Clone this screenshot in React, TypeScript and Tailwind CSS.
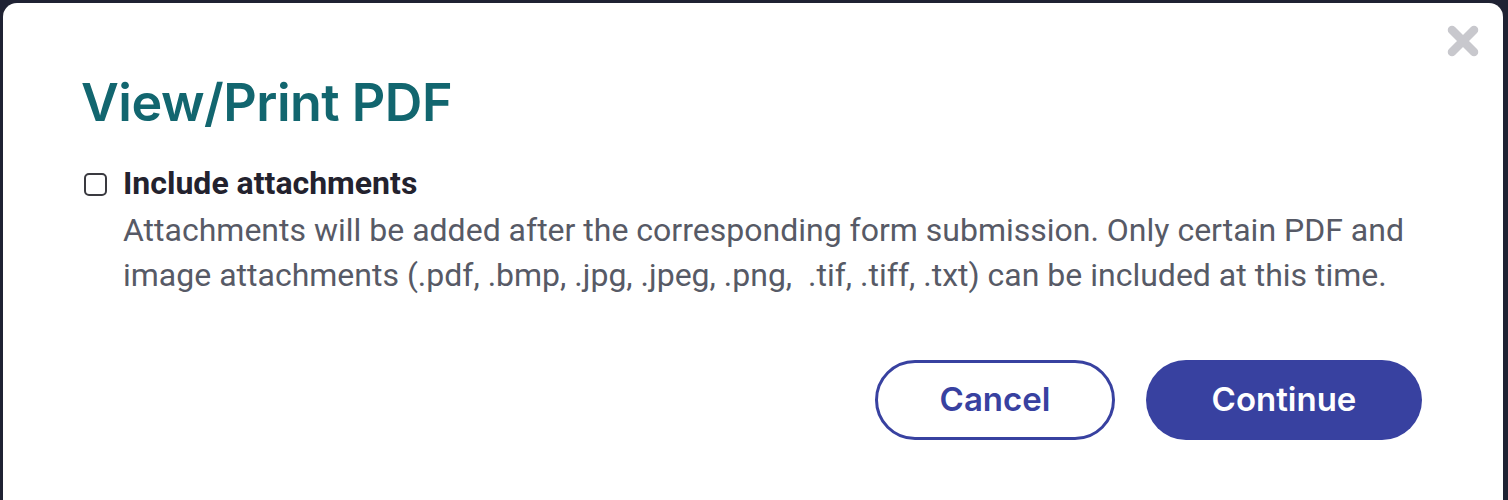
import React from "react";

export default function App() {
  return (
    <div className="h-[500px] w-[1508px] bg-[#1f2233] pl-[3px] pr-[5px] pt-[3px] overflow-hidden">
      <div className="relative h-[510px] rounded-[14px] bg-white pl-[81px] pr-[81px] pt-[70px]">
        <button className="absolute right-[23px] top-[21px] h-[34px] w-[34px]" aria-label="Close">
          <svg viewBox="0 0 34 34" className="h-[34px] w-[34px]">
            <path d="M6 6 L28 28 M28 6 L6 28" stroke="#c8c8cd" strokeWidth="8.5" strokeLinecap="round" />
          </svg>
        </button>
        <h1 className="-ml-[3px] text-[52px] leading-[60px] font-semibold text-[#12666f] tracking-[-0.5px]" style={{ fontFamily: "Inter, 'Open Sans', sans-serif" }}>
          View/Print PDF
        </h1>
        <div className="mt-[31px] flex items-start gap-[16px]" style={{ fontFamily: "Roboto, 'Liberation Sans', sans-serif" }}>
          <div className="mt-[9px] h-[23px] w-[23px] shrink-0 rounded-[5px] border-[2px] border-[#3a3a40] bg-white" />
          <div>
            <div className="text-[32px] leading-[38px] font-bold text-[#23222e]">Include attachments</div>
            <p className="mt-[6px] text-[32px] leading-[45px] text-[#575a66]">
              Attachments will be added after the corresponding form submission. Only certain PDF and<br />
              image attachments (.pdf, .bmp, .jpg, .jpeg, .png, &nbsp;.tif, .tiff, .txt) can be included at this time.
            </p>
          </div>
        </div>
        <div className="mt-[62px] flex justify-end gap-[31px]" style={{ fontFamily: "Inter, 'Open Sans', sans-serif" }}>
          <button className="h-[80px] w-[240px] rounded-full border-[3px] border-[#3841a0] bg-white text-[33px] font-semibold text-[#3841a0]">
            Cancel
          </button>
          <button className="h-[80px] w-[276px] rounded-full bg-[#3841a0] text-[33px] font-semibold text-white">
            Continue
          </button>
        </div>
      </div>
    </div>
  );
}
